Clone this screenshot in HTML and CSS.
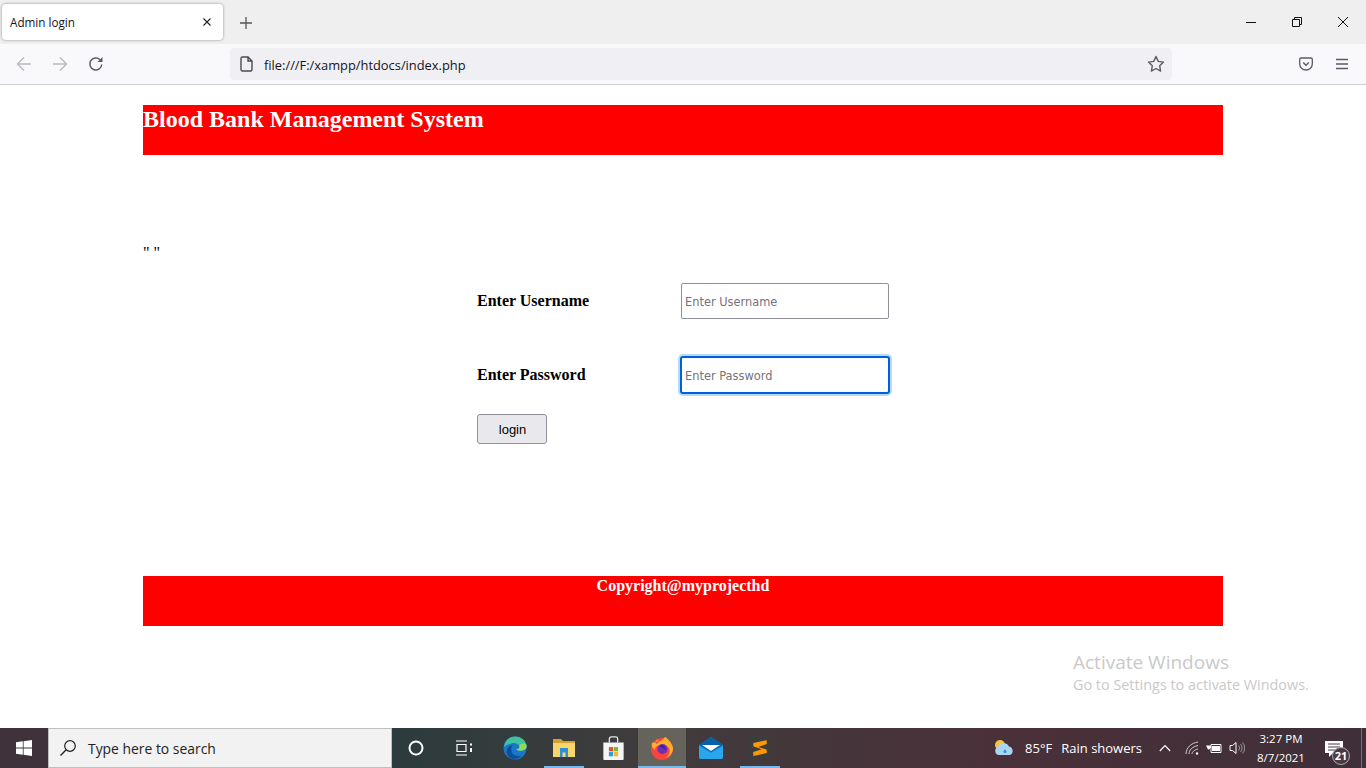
FILE: index.html
```html
<!DOCTYPE html>
<html lang="en">

<head>
    <meta charset="UTF-8">
    <meta name="viewport" content="width=device-width, initial-scale=1.0">
    <title>Admin login</title>
    <link rel="stylesheet" href="styles.css">
</head>

<body>
    <!-- browser tabs -->
    <div class="tabbar">
        <div class="tab">
            <span class="tab_title">Admin login</span>
            <svg class="tab_close" width="8" height="8" viewBox="0 0 8 8"><path d="M.5.5l7 7M7.500.5l-7 7" stroke="#222" stroke-width="1.100" fill="none"/></svg>
        </div>
        <svg class="new_tab" width="14" height="14" viewBox="0 0 14 14"><path d="M7 1v12M1 7h12" stroke="#555" stroke-width="1.300" fill="none"/></svg>
        <div class="win_btns">
            <svg width="12" height="12" viewBox="0 0 12 12"><path d="M1 6.500h10" stroke="#111" fill="none"/></svg>
            <svg width="12" height="12" viewBox="0 0 12 12"><path d="M1.500 3.500h7v7h-7zM3.500 3.500v-2h7v7h-2" stroke="#111" fill="none"/></svg>
            <svg width="12" height="12" viewBox="0 0 12 12"><path d="M1 1l10 10M11 1L1 11" stroke="#111" fill="none"/></svg>
        </div>
    </div>

    <!-- address bar -->
    <div class="toolbar">
        <div class="nav_btns">
            <svg width="16" height="16" viewBox="0 0 16 16"><path d="M15 8H1.500M8 1.500L1.500 8 8 14.500" stroke="#b9b9be" stroke-width="1.400" fill="none"/></svg>
            <svg width="16" height="16" viewBox="0 0 16 16"><path d="M1 8h13.500M8 1.500L14.500 8 8 14.500" stroke="#b9b9be" stroke-width="1.400" fill="none"/></svg>
            <svg width="16" height="16" viewBox="0 0 16 16"><path d="M13.800 8.500A6 6 0 1 1 12 3.700" stroke="#5b5b66" stroke-width="1.500" fill="none"/><path d="M14.500 1v5h-5z" fill="#5b5b66"/></svg>
        </div>
        <div class="urlbar">
            <svg width="14" height="16" viewBox="0 0 14 16"><path d="M2.500 1h5.500l4 4v8.500a1.500 1.500 0 0 1-1.500 1.500h-8A1.500 1.500 0 0 1 1 13.500v-11A1.500 1.500 0 0 1 2.500 1zM8 1v4h4" stroke="#4a4a55" stroke-width="1.400" fill="none"/></svg>
            <span class="url">file:///F:/xampp/htdocs/index.php</span>
            <svg class="star" width="18" height="18" viewBox="0 0 18 18"><path d="M9 1.500l2.300 4.900 5.200.7-3.800 3.700.9 5.300L9 13.500l-4.600 2.600.9-5.300L1.500 7.100l5.200-.7z" stroke="#5b5b66" stroke-width="1.400" fill="none" stroke-linejoin="round"/></svg>
        </div>
        <div class="tool_btns">
            <svg width="14" height="14" viewBox="0 0 14 14"><path d="M2 1h10a1.300 1.300 0 0 1 1.300 1.300V7A6.300 6 0 0 1 .7 7V2.300A1.300 1.300 0 0 1 2 1z" stroke="#5b5b66" stroke-width="1.300" fill="none"/><path d="M4.200 5.500L7 8.300l2.800-2.800" stroke="#5b5b66" stroke-width="1.400" fill="none"/></svg>
            <svg width="14" height="16" viewBox="0 0 14 16"><path d="M1 3.500h12M1 8h12M1 12.500h12" stroke="#5b5b66" stroke-width="1.400" fill="none"/></svg>
        </div>
    </div>

    <!-- page -->
    <div class="page">
        <div class="header">Blood Bank Management System</div>
        <div class="quotes">" "</div>
        <form class="login">
            <div class="row">
                <label class="lbl" for="user">Enter Username</label>
                <input class="txt" id="user" type="text" placeholder="Enter Username">
            </div>
            <div class="row row2">
                <label class="lbl" for="pass">Enter Password</label>
                <input class="txt txt_focus" id="pass" type="password" placeholder="Enter Password">
            </div>
            <button class="btn" type="button">login</button>
        </form>
        <div class="footer">Copyright@myprojecthd</div>
        <div class="activate">
            <div class="activate_t">Activate Windows</div>
            <div class="activate_s">Go to Settings to activate Windows.</div>
        </div>
    </div>

    <!-- taskbar -->
    <div class="taskbar">
        <div class="start">
            <svg width="16" height="16" viewBox="0 0 16 16"><path d="M0 2.300l6.800-1v6.300H0zM7.600 1.200L16 0v7.600H7.600zM0 8.400h6.800v6.300l-6.800-1zM7.600 8.400H16V16l-8.400-1.200z" fill="#fff"/></svg>
        </div>
        <div class="search">
            <svg width="18" height="18" viewBox="0 0 18 18"><circle cx="11" cy="7" r="5.300" stroke="#222" stroke-width="1.200" fill="none"/><path d="M7.200 10.800L1.500 16.500" stroke="#222" stroke-width="1.400"/></svg>
            <span>Type here to search</span>
        </div>
        <div class="apps">
            <div class="app"><svg width="16" height="16" viewBox="0 0 16 16"><circle cx="8" cy="8" r="6.500" stroke="#fff" stroke-width="2" fill="none"/></svg></div>
            <div class="app"><svg width="18" height="16" viewBox="0 0 18 16"><path d="M1 1h11M1 15h11M2 4.500h9v7H2z" stroke="#fff" stroke-width="1.200" fill="none"/><path d="M15 3.500h2v2h-2zM15 8h2v4h-2z" fill="#fff"/></svg></div>
            <div class="app app_edge"><svg width="24" height="24" viewBox="0 0 26 26"><circle cx="13" cy="13" r="12.500" fill="#1b78c8"/><path d="M1 12C2 5 7 .5 13 .5c7 0 12.500 5 12.500 11 0 3-3 4.500-6.500 4.500-2.500 0-4-.8-4.500-1.800 3 .2 4-1.500 3-3.700-1.200-2.500-5-3.500-8.500-2.500C5.500 9.200 3 10 1 12z" fill="#3fc4a0"/><path d="M25.500 11.500c0 3-3 4.500-6.500 4.500-2.500 0-4-.8-4.500-1.800 3 .2 4-1.500 3-3.700 2-3 6-3 8-1z" fill="#8fdc5c"/><path d="M9 15c0 5 5 8 11 6-3 4-9 5-13 2-3-2-4-6-2-10 1-2 4-3 6-3-2 1-2 3-2 5z" fill="#0c4f96"/></svg></div>
            <div class="app app_pin app_on"><svg width="22" height="18" viewBox="0 0 22 18"><path d="M0 0h8l2 2h12v3H0z" fill="#d8a02c"/><path d="M0 4h22v14H0z" fill="#f5d76e"/><path d="M7 9h8v9H7z" fill="#2f8fd8"/><path d="M9.500 13.500h3V18h-3z" fill="#f5d76e"/></svg></div>
            <div class="app app_pin"><svg width="23" height="24" viewBox="0 0 24 26"><path d="M7.500 7V3a2 2 0 0 1 2-2h5a2 2 0 0 1 2 2v4" stroke="#e6e6e6" stroke-width="1.400" fill="none"/><path d="M1 7h22v18a1 1 0 0 1-1 1H2a1 1 0 0 1-1-1z" fill="#f5f5f5"/><path d="M7 12h4.600v4.600H7z" fill="#e8512a"/><path d="M12.400 12H17v4.600h-4.600z" fill="#7cb82f"/><path d="M7 17.400h4.600V22H7z" fill="#1fa1e8"/><path d="M12.400 17.400H17V22h-4.600z" fill="#fbb81c"/></svg></div>
            <div class="app app_pin app_on app_active"><svg width="24" height="24" viewBox="0 0 24 24"><circle cx="12" cy="13" r="11" fill="#f9443f"/><path d="M2 7c3-1 4 0 5 1 2-3 5-3 8-7 3 2 7 6 8 11 0 5-3 9-8 10 5-3 6-8 3-11-2-2-5-3-8-1-3-1-5 1-5 4-2-2-4-4-3-7z" fill="#fdb02a"/><path d="M5 6c1-2 2-3 3-3l1 3z" fill="#ff7a1f"/><circle cx="12.500" cy="13" r="5" fill="#6e2fb6"/><path d="M9 10c3-2 7 0 7 4-2-2-5-3-7-4z" fill="#3b2390"/></svg></div>
            <div class="app app_pin"><svg width="24" height="22" viewBox="0 0 24 22"><path d="M12 0l12 8v12a2 2 0 0 1-2 2H2a2 2 0 0 1-2-2V8z" fill="#1490df"/><path d="M12 0l12 8-12 7L0 8z" fill="#0b5fa8"/><path d="M3 8h18l-9 6z" fill="#fff"/><path d="M0 9l12 7 12-7v11a2 2 0 0 1-2 2H2a2 2 0 0 1-2-2z" fill="#28a8ea"/></svg></div>
            <div class="app app_pin app_on"><div class="sublime"><svg width="16" height="18" viewBox="0 0 14 16"><path d="M13 1v3.500L5.500 7l7.500 2.500v3L1 15v-3.500L8.500 9 1 6.500V3.500z" fill="#ff9800"/></svg></div></div>
        </div>
        <div class="tray">
            <svg class="weather" width="22" height="18" viewBox="0 0 22 18"><circle cx="7" cy="6" r="5" fill="#f6c445"/><path d="M6 16a4 4 0 0 1-1-7.800 6 6 0 0 1 11-.7 4.500 4.500 0 0 1 1 8.500z" fill="#a8d5f2"/><path d="M12 10l-1.500 2.500a1.500 1.500 0 0 0 3 0z" fill="#2f8fd8"/></svg>
            <span class="temp">85°F</span>
            <span class="rain">Rain showers</span>
            <svg class="tray_i chev" width="12" height="8" viewBox="0 0 12 8"><path d="M.8 7L6 1.500 11.200 7" stroke="#fff" stroke-width="1.100" fill="none"/></svg>
            <svg class="tray_i" width="14" height="14" viewBox="0 0 14 14"><path d="M1 13C1 7 6 2 13 1M4 13c0-4 3-7 9-8.500M7 13c0-2 2-4 6-5" stroke="#ccc" stroke-width="1" fill="none"/><circle cx="12" cy="12.500" r="1.200" fill="#fff"/></svg>
            <svg class="tray_i" width="16" height="12" viewBox="0 0 16 12"><path d="M5 2.500h10v8H5z" stroke="#fff" fill="none"/><path d="M6 4h8v5H6zM1 1.500v2M3.500 1.500v2M0 3.500h5v2L3 7.500H2z" fill="#fff"/></svg>
            <svg class="tray_i" width="16" height="14" viewBox="0 0 16 14"><path d="M1 4.500h2.500L7 1.500v11l-3.500-3H1z" stroke="#fff" fill="none"/><path d="M9.500 4.500a3.500 3.500 0 0 1 0 5M11.500 3a6 6 0 0 1 0 8M13.500 1.500a8 8 0 0 1 0 11" stroke="#999" fill="none"/></svg>
            <div class="clock">
                <div>3:27 PM</div>
                <div>8/7/2021</div>
            </div>
            <div class="notif">
                <svg width="18" height="16" viewBox="0 0 18 16"><path d="M0 0h18v12H8l-4 4v-4H0z" fill="#fff"/><path d="M3 3h12M3 6h12M3 9h8" stroke="#4a3a44"/></svg>
                <span class="badge">21</span>
            </div>
            <div class="desk"></div>
        </div>
    </div>
</body>

</html>
```
FILE: styles.css
```css
* {
    margin: 0;
    padding: 0;
    box-sizing: border-box;
}

html,
body {
    height: 768px;
    overflow: hidden;
}

body {
    display: flex;
    flex-direction: column;
    background-color: #fff;
    font-family: "Liberation Serif", serif;
}

/* tabs */

.tabbar {
    display: flex;
    align-items: flex-start;
    height: 44px;
    background-color: #efeff0;
    font-family: "Open Sans", sans-serif;
}

.tab {
    display: flex;
    align-items: center;
    justify-content: space-between;
    width: 221px;
    height: 36px;
    margin: 4px 0 0 2px;
    padding: 0 12px 0 8px;
    background-color: #fff;
    border-radius: 4px;
    box-shadow: 0 0 3px rgba(0, 0, 0, .4);
    font-size: 11.7px;
    color: #15141a;
}

.new_tab {
    margin: 16px 0 0 16px;
}

.win_btns {
    display: flex;
    gap: 34px;
    margin: 16px 17px 0 auto;
}

/* address bar */

.toolbar {
    display: flex;
    align-items: center;
    height: 41px;
    background-color: #f9f9fb;
    border-bottom: 1px solid #cfcfd3;
    padding-bottom: 1px;
}

.nav_btns {
    display: flex;
    gap: 20px;
    width: 230px;
    padding-left: 16px;
}

.urlbar {
    display: flex;
    align-items: center;
    width: 942px;
    height: 32px;
    padding: 0 7px 0 10px;
    background-color: #f0f0f4;
    border-radius: 4px;
}

.url {
    margin-left: 10px;
    padding-top: 2px;
    font-family: "Open Sans", sans-serif;
    font-size: 12.87px;
    color: #15141a;
}

.star {
    margin-left: auto;
}

.tool_btns {
    display: flex;
    align-items: center;
    gap: 22px;
    margin-left: 127px;
}

/* page */

.page {
    position: relative;
    flex: 1;
    width: 1080px;
    margin-left: 143px;
    padding-top: 20px;
}

.header {
    height: 50px;
    background-color: #f00;
    color: #fff;
    font-size: 24px;
    font-weight: bold;
    line-height: 28px;
}

.quotes {
    margin-top: 89px;
    font-size: 16px;
    line-height: 18px;
}

.login {
    display: flex;
    flex-direction: column;
    align-items: flex-start;
    height: 314px;
    padding: 21px 0 0 334px;
}

.row {
    display: flex;
    align-items: center;
    height: 36px;
}

.row2 {
    margin-top: 38px;
}

.lbl {
    width: 204px;
    font-size: 16px;
    font-weight: bold;
    color: #000;
}

.txt {
    width: 208px;
    height: 36px;
    padding: 1px 3px 0;
    border: 1px solid #8f8f9d;
    border-radius: 2px;
    background-color: #fff;
    font-family: "DejaVu Sans", sans-serif;
    font-size: 11.4px;
}

.txt::placeholder {
    color: #77727a;
    opacity: 1;
}

.txt_focus {
    width: 210px;
    height: 38px;
    margin-left: -1px;
    border: 2px solid #0060df;
    border-radius: 3px;
    box-shadow: 0 0 0 2px #b5dbf6;
}

.btn {
    width: 70px;
    height: 30px;
    margin-top: 21px;
    padding-left: 1px;
    background-color: #e9e9ed;
    border: 1px solid #8f8f9d;
    border-radius: 3px;
    font-family: "Liberation Sans", sans-serif;
    font-size: 13px;
    color: #000;
}

.footer {
    height: 50px;
    background-color: #f00;
    color: #fff;
    font-size: 16px;
    font-weight: bold;
    text-align: center;
    line-height: 20px;
}

.activate {
    position: absolute;
    top: 564px;
    left: 930px;
    width: 260px;
    font-family: "Open Sans", sans-serif;
    color: #c9c9c9;
}

.activate_t {
    font-size: 19px;
    line-height: 26px;
}

.activate_s {
    font-size: 14.4px;
    line-height: 20px;
}

/* taskbar */

.taskbar {
    display: flex;
    align-items: stretch;
    height: 40px;
    background: linear-gradient(90deg, #40323a 0, #40323a 48px, #2c3b3c 392px, #3f3c3c 640px, #4a3039 1000px, #3f2f38 1366px);
    color: #fff;
    font-family: "Open Sans", sans-serif;
}

.start {
    display: flex;
    align-items: center;
    justify-content: center;
    width: 48px;
}

.search {
    display: flex;
    align-items: center;
    gap: 11px;
    width: 344px;
    padding-left: 10px;
    background-color: #f2f2f2;
    border: 1px solid #bfbfbf;
    font-size: 13.9px;
    color: #222;
}

.apps {
    display: flex;
}

.app {
    position: relative;
    display: flex;
    align-items: center;
    justify-content: center;
    width: 48px;
}

.app_edge {
    margin-left: 3px;
}

.app_pin {
    margin-left: 1px;
}

.app_on::after {
    content: "";
    position: absolute;
    left: 4px;
    right: 4px;
    bottom: 0;
    height: 2px;
    background-color: #76b9ed;
}

.app_active {
    background-color: #66635c;
}

.app_active::after {
    left: 0;
    right: 0;
}

.sublime {
    display: flex;
    align-items: center;
    justify-content: center;
    width: 24px;
    height: 24px;
    background-color: #3c3c3c;
    border-radius: 2px;
}

.tray {
    display: flex;
    align-items: center;
    margin-left: auto;
    font-size: 13px;
}

.temp {
    margin-left: 10px;
}

.rain {
    margin-left: 9px;
}

.chev {
    margin-left: 17px;
}

.tray_i {
    margin-right: 7px;
}

.chev + .tray_i {
    margin-left: 7px;
}

.clock {
    width: 58px;
    font-size: 11.5px;
    line-height: 19px;
    text-align: center;
}

.notif {
    position: relative;
    width: 51px;
    padding: 5px 0 0 15px;
}

.badge {
    position: absolute;
    top: 11px;
    left: 22px;
    width: 18px;
    height: 18px;
    background-color: #4a3a44;
    border: 1px solid #aaa;
    border-radius: 50%;
    font-size: 11px;
    font-weight: bold;
    line-height: 16px;
    text-align: center;
}

.desk {
    align-self: stretch;
    width: 5px;
    border-left: 1px solid #77707a;
}
```
